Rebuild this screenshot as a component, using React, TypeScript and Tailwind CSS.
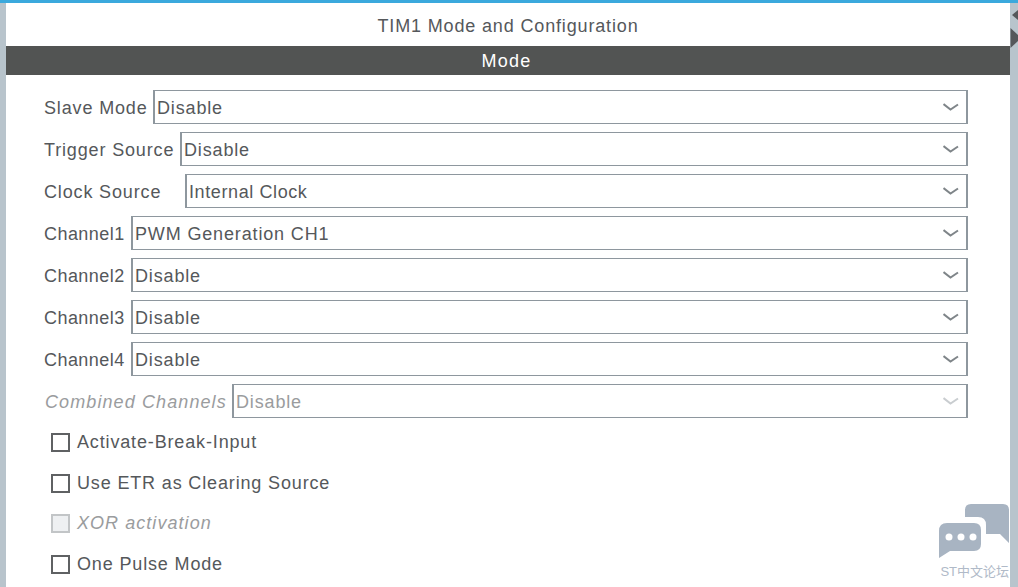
const rows = [
  { label: "Slave Mode", width: "w-[109px]", value: "Disable" },
  { label: "Trigger Source", width: "w-[136px]", value: "Disable" },
  { label: "Clock Source", width: "w-[141px]", value: "Internal Clock", tight: true },
  { label: "Channel1", width: "w-[87px]", value: "PWM Generation CH1", narrow: true },
  { label: "Channel2", width: "w-[87px]", value: "Disable", narrow: true },
  { label: "Channel3", width: "w-[87px]", value: "Disable", narrow: true },
  { label: "Channel4", width: "w-[87px]", value: "Disable", narrow: true },
  { label: "Combined Channels", width: "w-[188px]", value: "Disable", disabled: true },
];

const checks = [
  { label: "Activate-Break-Input", mt: "mt-[13px]" },
  { label: "Use ETR as Clearing Source", mt: "mt-[19px]" },
  { label: "XOR activation", mt: "mt-[18px]", disabled: true },
  { label: "One Pulse Mode", mt: "mt-[19px]" },
];

function Chevron({ disabled }: { disabled?: boolean }) {
  return (
    <svg width="16" height="8" viewBox="0 0 16 8" className="mr-[7px] shrink-0">
      <path d="M0.5 1 L7.5 6.5 L15 1.5" fill="none" stroke={disabled ? "#c9cdd0" : "#7f8589"} strokeWidth="2" />
    </svg>
  );
}

export default function App() {
  return (
    <div className="relative flex h-[587px] w-[1018px] overflow-hidden bg-[#b8c4cc] font-['Liberation_Sans',sans-serif] text-[18px] tracking-[0.85px] text-[#55585b]">
      <div className="absolute inset-x-0 top-0 h-[3px] bg-[#3ba9dd]" />
      <main className="ml-[6px] flex w-[1004px] flex-col bg-white pt-[3px]">
        <div className="flex h-[43px] items-center justify-center pt-[3px]">TIM1 Mode and Configuration</div>
        <div className="flex h-[29px] items-center justify-center bg-[#525453] pr-[3px] pt-[1px] tracking-[1.2px] text-white">Mode</div>

        <div className="flex flex-col gap-2 pl-[38px] pt-[15px]">
          {rows.map((r) => (
            <div key={r.label} className="flex h-[34px] items-center">
              <span className={`${r.width} shrink-0 whitespace-nowrap pt-[2px] ${r.narrow ? "tracking-[0.45px]" : ""} ${r.disabled ? "pl-px italic tracking-[1.1px] text-[#9a9c9e]" : ""}`}>{r.label}</span>
              <div className={`mr-[42px] flex h-[34px] min-w-0 flex-1 items-center justify-between border-x-2 border-y border-[#8e979e] pl-[2px] ${r.disabled ? "text-[#9a9c9e]" : ""}`}>
                <span className={`pt-[2px] ${r.tight ? "tracking-[0.6px]" : ""}`}>{r.value}</span>
                <Chevron disabled={r.disabled} />
              </div>
            </div>
          ))}
        </div>

        <div className="flex flex-col pl-[45px]">
          {checks.map((c) => (
            <label key={c.label} className={`flex h-[22px] items-center gap-[7px] ${c.mt} ${c.disabled ? "italic tracking-[1.05px] text-[#9a9c9e]" : ""}`}>
              <span className={`h-[19px] w-[19px] shrink-0 border-2 ${c.disabled ? "border-[#c2c5c7] bg-[#eef0f2]" : "border-[#5f6163] bg-white"}`} />
              {c.label}
            </label>
          ))}
        </div>
      </main>

      {/* marks on the right strip */}
      <svg width="8" height="40" viewBox="0 0 8 40" className="absolute right-0 top-[8px]">
        <path d="M8 2 L2 7 L8 12 Z" fill="#55585b" />
        <path d="M0.5 20 L8 27 V33 L0.5 40 Z" fill="#55585b" />
      </svg>

      {/* forum badge */}
      <div className="absolute left-[938px] top-[503px] flex w-[72px] flex-col items-end">
        <svg width="72" height="56" viewBox="0 0 72 56">
          <path d="M27 14 V7 Q27 1 33 1 H65 Q71 1 71 7 V40 L62 31 H48 V22 Q48 14 40 14 Z" fill="#a8b4c2" />
          <path d="M1 28 Q1 20 9 20 H36 Q43 20 43 27 V41 Q43 48 36 48 H12 L1 55 Z" fill="#a8b4c2" />
          <circle cx="11" cy="34" r="3.5" fill="#fff" />
          <circle cx="23" cy="34" r="3.5" fill="#fff" />
          <circle cx="35" cy="34" r="3.5" fill="#fff" />
        </svg>
        <span className="mr-px mt-[3px] whitespace-nowrap font-['Liberation_Sans','Noto_Sans_CJK_SC',sans-serif] text-[13px] tracking-normal text-[#b0bac8]">ST中文论坛</span>
      </div>
    </div>
  );
}
